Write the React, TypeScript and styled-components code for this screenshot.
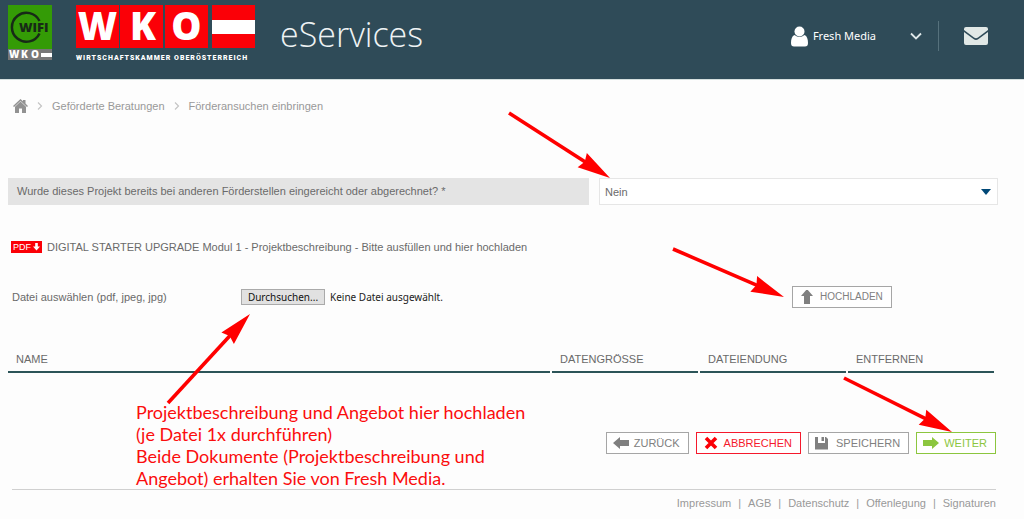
import React, { useRef, useState } from 'react';
import styled, { createGlobalStyle } from 'styled-components';

const GlobalStyle = createGlobalStyle`
  *, *::before, *::after { box-sizing: border-box; }
  body {
    margin: 0;
    background: #fdfdfd;
    color: #6a6a6a;
    font: 11px/16px Arial, "Liberation Sans", sans-serif;
  }
  button, select { font: inherit; color: inherit; }
  a { color: inherit; text-decoration: none; }
`;

const Header = styled.header`
  display: flex;
  align-items: flex-start;
  height: 80px;
  padding: 5px 36px 0 8px;
  background: #2f4b58;
  border-bottom: 1px solid #d5dfde;
`;

const LogoLink = styled.a<{ $gap: number }>`
  display: block;
  margin-right: ${(p) => p.$gap}px;
  svg { display: block; overflow: visible; }
`;

const Title = styled.h1`
  margin: 8px 0 0;
  color: #eef3f4;
  font: 300 34px/42px "Open Sans", "Noto Sans", sans-serif;
`;

const UserArea = styled.div`
  display: flex;
  align-items: center;
  height: 30px;
  margin: 16px 0 0 auto;
`;

const UserButton = styled.button`
  display: flex;
  align-items: center;
  padding: 0;
  border: 0;
  background: none;
  color: #fff;
  font: 11px/16px "Noto Sans", sans-serif;
  cursor: pointer;
  span { margin: 0 34px 0 5px; }
`;

const MailButton = styled.button`
  display: flex;
  align-items: center;
  height: 30px;
  margin-left: 16px;
  padding: 0 0 0 25px;
  border: 0;
  border-left: 1px solid #56717c;
  background: none;
  cursor: pointer;
`;

const Main = styled.main`
  padding: 18px 28px 0 8px;
`;

const Breadcrumb = styled.nav`
  display: flex;
  align-items: center;
  gap: 9px;
  height: 16px;
  padding-left: 5px;
  color: #999;
  a { display: flex; }
`;

const Question = styled.div`
  display: grid;
  grid-template-columns: 581fr 399fr;
  gap: 10px;
  margin: 64px -2px 0 0;
`;

const QuestionLabel = styled.label`
  height: 27px;
  padding: 0 9px;
  background: #e4e4e4;
  line-height: 27px;
`;

const SelectBox = styled.div`
  position: relative;
  display: flex;
  align-items: center;
  > svg:first-of-type { position: absolute; right: 7px; pointer-events: none; }
`;

const Select = styled.select`
  width: 100%;
  height: 27px;
  padding: 0 20px 0 5px;
  border: 1px solid #e6e6e6;
  border-radius: 0;
  background: #fff;
  appearance: none;
`;

const PdfLink = styled.a`
  display: flex;
  align-items: center;
  gap: 5px;
  width: fit-content;
  margin: 34px 0 0 3px;
`;

const PdfBadge = styled.span`
  display: flex;
  align-items: center;
  justify-content: center;
  gap: 2px;
  width: 31px;
  height: 12px;
  background: #fb0007;
  color: #fff;
  font-size: 9px;
  line-height: 12px;
`;

const UploadRow = styled.form`
  display: grid;
  grid-template-columns: 229fr 551fr 204fr;
  align-items: center;
  margin: 31px 0 0 4px;
`;

const FilePicker = styled.div`
  display: flex;
  align-items: center;
  gap: 5px;
  color: #222;
  font: 10px/16px "Noto Sans", sans-serif;
`;

const HiddenFile = styled.input`
  position: absolute;
  width: 1px;
  height: 1px;
  opacity: 0;
  pointer-events: none;
`;

const Anchor = styled.div`
  position: relative;
  width: fit-content;
`;

const BrowseButton = styled.button`
  display: block;
  width: 84px;
  height: 16px;
  padding: 0;
  border: 1px solid #aaa;
  background: #e1e1e1;
  color: #111;
  line-height: 14px;
`;

const tones = { grey: ['#808080', '#a6a6a6'], red: ['#f5192c', '#f5192c'], green: ['#8cc63f', '#8cc63f'] };

const ActionButton = styled.button<{ $tone: keyof typeof tones; $small?: boolean }>`
  display: flex;
  align-items: center;
  gap: 5px;
  height: 22px;
  padding: 0 8px 0 6px;
  border: 1px solid ${(p) => tones[p.$tone][1]};
  background: #fff;
  color: ${(p) => tones[p.$tone][0]};
  font-size: ${(p) => (p.$small ? 10 : 11)}px;
  line-height: 20px;
  white-space: nowrap;
  cursor: pointer;
`;

const Files = styled.table`
  width: calc(100% + 2px);
  margin: 41px 0 0 -2px;
  border-spacing: 2px 0;
  table-layout: fixed;
`;

const HeadCell = styled.th<{ $width?: string }>`
  width: ${(p) => p.$width ?? 'auto'};
  height: 24px;
  padding: 1px 8px 4px;
  border-bottom: 2px solid #2c5458;
  font-weight: normal;
  line-height: 16px;
  text-align: left;
`;

const Bottom = styled.section`
  display: flex;
  align-items: flex-start;
  justify-content: space-between;
  margin-top: 28px;
`;

const Note = styled.p`
  margin: 0 0 0 128px;
  color: #fb0d0d;
  font: 18px/22px Lato, "Noto Sans", sans-serif;
  white-space: nowrap;
`;

const Actions = styled.div`
  display: flex;
  gap: 7px;
  margin-top: 31px;
`;

const Footer = styled.footer`
  display: flex;
  justify-content: flex-end;
  gap: 7px;
  margin: 0 28px 0 12px;
  padding-top: 5px;
  border-top: 1px solid #d0d0d0;
  color: #999;
`;

const Pointer = styled.svg<{ $place: string }>`
  position: absolute;
  z-index: 2;
  overflow: visible;
  fill: #ff0000;
  stroke: #ff0000;
  pointer-events: none;
  ${(p) => p.$place}
`;

type ArrowProps = { w: number; h: number; up?: boolean; place: string };

/* A red arrow across its box, from the left edge to a tip on the right edge. */
function Arrow({ w, h, up, place }: ArrowProps) {
  const length = Math.hypot(w, h);
  const angle = (Math.atan2(up ? -h : h, w) * 180) / Math.PI;
  return (
    <Pointer $place={place} width={w} height={h} aria-hidden="true">
      <g transform={`translate(0 ${up ? h : 0}) rotate(${angle})`}>
        <path d={`M0 0H${length - 28}`} strokeWidth="3.6" />
        <path d={`M${length} 0L${length - 33} 8.5L${length - 30} 0L${length - 33} -8.5Z`} stroke="none" />
      </g>
    </Pointer>
  );
}

function WifiLogo() {
  return (
    <svg width="44" height="56" role="img" aria-label="WIFI WKO">
      <rect width="44" height="44" fill="#349b06" />
      <path d="M31.500 16A14.500 14.500 0 1 0 31.500 28.500" fill="none" stroke="#172a17" strokeWidth="2.500" />
      <text x="11" y="27" fill="#172a17" fontFamily="Open Sans" fontWeight="800" fontSize="13">WIFI</text>
      <rect y="44" width="44" height="11" fill="#777" />
      <g fill="#fff" fontFamily="Open Sans" fontWeight="800" fontSize="10">
        <text x="1" y="53">W</text>
        <text x="13" y="53">K</text>
        <text x="23" y="53">O</text>
      </g>
      <rect x="33" y="48" width="11" height="4" fill="#fff" />
    </svg>
  );
}

function WkoLogo() {
  return (
    <svg width="180" height="57" role="img" aria-label="WKO Wirtschaftskammer Oberösterreich">
      <g fill="#fb0007">
        <rect width="43" height="43" />
        <rect x="44" width="43" height="43" />
        <rect x="89" width="43" height="43" />
        <rect x="136" width="43" height="43" />
      </g>
      <rect x="136" y="15" width="43" height="14" fill="#fff" />
      <g fill="#fff" fontFamily="Open Sans" fontWeight="800" fontSize="38" textAnchor="middle">
        <text x="21.500" y="35">W</text>
        <text x="67" y="35">K</text>
        <text x="110.500" y="35">O</text>
      </g>
      <text y="55" fill="#fff" fontFamily="Roboto" fontWeight="900" fontSize="7" letterSpacing="1">
        WIRTSCHAFTSKAMMER OBERÖSTERREICH
      </text>
    </svg>
  );
}

const Crumb = () => (
  <svg width="6" height="8" fill="none" stroke="#c4c4c4" strokeWidth="1.2" aria-hidden="true">
    <path d="M1 0.5L4.5 4L1 7.5" />
  </svg>
);

const BlockArrow = ({ turn }: { turn: number }) => (
  <svg width="16" height="14" viewBox="-8 -7 16 14" fill="currentColor" aria-hidden="true">
    <path transform={`rotate(${turn})`} d="M8 0L1 -6V-3H-8V3H1V6Z" />
  </svg>
);

const footerLinks = ['Impressum', 'AGB', 'Datenschutz', 'Offenlegung', 'Signaturen'];

export default function App() {
  const fileInput = useRef<HTMLInputElement>(null);
  const [fileName, setFileName] = useState('Keine Datei ausgewählt.');

  return (
    <>
      <GlobalStyle />
      <Header>
        <LogoLink href="#" $gap={24}><WifiLogo /></LogoLink>
        <LogoLink href="#" $gap={24}><WkoLogo /></LogoLink>
        <Title>eServices</Title>
        <UserArea>
          <UserButton type="button">
            <svg width="17" height="21" fill="#fff" aria-hidden="true">
              <path d="M3.500 9C1 10 0 13 0 17Q0 20.500 3 20.500H14Q17 20.500 17 17C17 13 16 10 13.500 9Q8.500 13 3.500 9Z" />
              <circle cx="8.500" cy="5.500" r="5" />
            </svg>
            <span>Fresh Media</span>
            <svg width="12" height="8" fill="none" stroke="#dfe8ea" strokeWidth="1.800" aria-hidden="true">
              <path d="M1 1.500L6 6.500L11 1.500" />
            </svg>
          </UserButton>
          <MailButton type="button" aria-label="Nachrichten">
            <svg width="24" height="20" fill="#e1e8e6" aria-hidden="true">
              <path d="M0 3Q0 1 2 1H22Q24 1 24 3V4L14 11.500Q12 13 10 11.500L0 4Z" />
              <path d="M0 6L9.500 13Q12 14.800 14.500 13L24 6V17Q24 19 22 19H2Q0 19 0 17Z" />
            </svg>
          </MailButton>
        </UserArea>
      </Header>

      <Main>
        <Breadcrumb aria-label="Brotkrumen">
          <a href="#" aria-label="Startseite">
            <svg width="15" height="14" fill="#929292" aria-hidden="true">
              <path d="M7.500 0L10 2.200V1H12.500V4.500L15 7L14 8L7.500 2L1 8L0 7Z" />
              <path d="M7.500 2.600L13 7.800V14H9V9.500H6V14H2V7.800Z" />
            </svg>
          </a>
          <Crumb />
          <a href="#">Geförderte Beratungen</a>
          <Crumb />
          <a href="#">Förderansuchen einbringen</a>
        </Breadcrumb>

        <Question>
          <QuestionLabel htmlFor="funding">
            Wurde dieses Projekt bereits bei anderen Förderstellen eingereicht oder abgerechnet? *
          </QuestionLabel>
          <SelectBox>
            <Select id="funding" defaultValue="Nein">
              <option>Nein</option>
              <option>Ja</option>
            </Select>
            <svg width="10" height="6" fill="#004877" aria-hidden="true"><path d="M0 0H10L5 6Z" /></svg>
            <Arrow w={101} h={65} place="left: -90px; bottom: 100%;" />
          </SelectBox>
        </Question>

        <PdfLink href="#">
          <PdfBadge>
            PDF
            <svg width="7" height="8" fill="#fff" aria-hidden="true"><path d="M2.200 0H4.800V3.500H7L3.500 7.500L0 3.500H2.200Z" /></svg>
          </PdfBadge>
          DIGITAL STARTER UPGRADE Modul 1 - Projektbeschreibung - Bitte ausfüllen und hier hochladen
        </PdfLink>

        <UploadRow onSubmit={(e) => e.preventDefault()}>
          <label htmlFor="upload">Datei auswählen (pdf, jpeg, jpg)</label>
          <FilePicker>
            <HiddenFile
              ref={fileInput}
              id="upload"
              type="file"
              tabIndex={-1}
              accept=".pdf,.jpeg,.jpg"
              onChange={(e) => setFileName(e.target.files?.[0]?.name ?? 'Keine Datei ausgewählt.')}
            />
            <Anchor>
              <BrowseButton type="button" onClick={() => fileInput.current?.click()}>Durchsuchen...</BrowseButton>
              <Arrow w={82} h={89} up place="left: -73px; top: calc(100% + 9px);" />
            </Anchor>
            <span>{fileName}</span>
          </FilePicker>
          <Anchor>
            <ActionButton type="submit" $tone="grey" $small><BlockArrow turn={-90} />HOCHLADEN</ActionButton>
            <Arrow w={111} h={48} place="right: calc(100% + 8px); bottom: 11px;" />
          </Anchor>
        </UploadRow>

        <Files>
          <thead>
            <tr>
              <HeadCell scope="col">NAME</HeadCell>
              <HeadCell scope="col" $width="14.9%">DATENGRÖSSE</HeadCell>
              <HeadCell scope="col" $width="14.9%">DATEIENDUNG</HeadCell>
              <HeadCell scope="col" $width="14.9%">ENTFERNEN</HeadCell>
            </tr>
          </thead>
        </Files>

        <Bottom>
          <Note>
            Projektbeschreibung und Angebot hier hochladen<br />
            (je Datei 1x durchführen)<br />
            Beide Dokumente (Projektbeschreibung und<br />
            Angebot) erhalten Sie von Fresh Media.
          </Note>
          <Actions>
            <ActionButton type="button" $tone="grey"><BlockArrow turn={180} />ZURÜCK</ActionButton>
            <ActionButton type="button" $tone="red">
              <svg width="16" height="14" stroke="#fb0007" strokeWidth="3.600" aria-hidden="true">
                <path d="M3 2L13 12M13 2L3 12" />
              </svg>
              ABBRECHEN
            </ActionButton>
            <ActionButton type="button" $tone="grey">
              <svg width="16" height="14" fill="currentColor" aria-hidden="true">
                <path fillRule="evenodd" d="M0 1H3V7H10V1H11L13 3V13.500H0ZM6.500 1H9V5H6.500Z" />
              </svg>
              SPEICHERN
            </ActionButton>
            <Anchor>
              <ActionButton type="button" $tone="green"><BlockArrow turn={0} />WEITER</ActionButton>
              <Arrow w={108} h={54} place="left: -72px; bottom: 100%;" />
            </Anchor>
          </Actions>
        </Bottom>
      </Main>

      <Footer>
        {footerLinks.map((name, i) => (
          <React.Fragment key={name}>
            {i > 0 && <span>|</span>}
            <a href="#">{name}</a>
          </React.Fragment>
        ))}
      </Footer>
    </>
  );
}
